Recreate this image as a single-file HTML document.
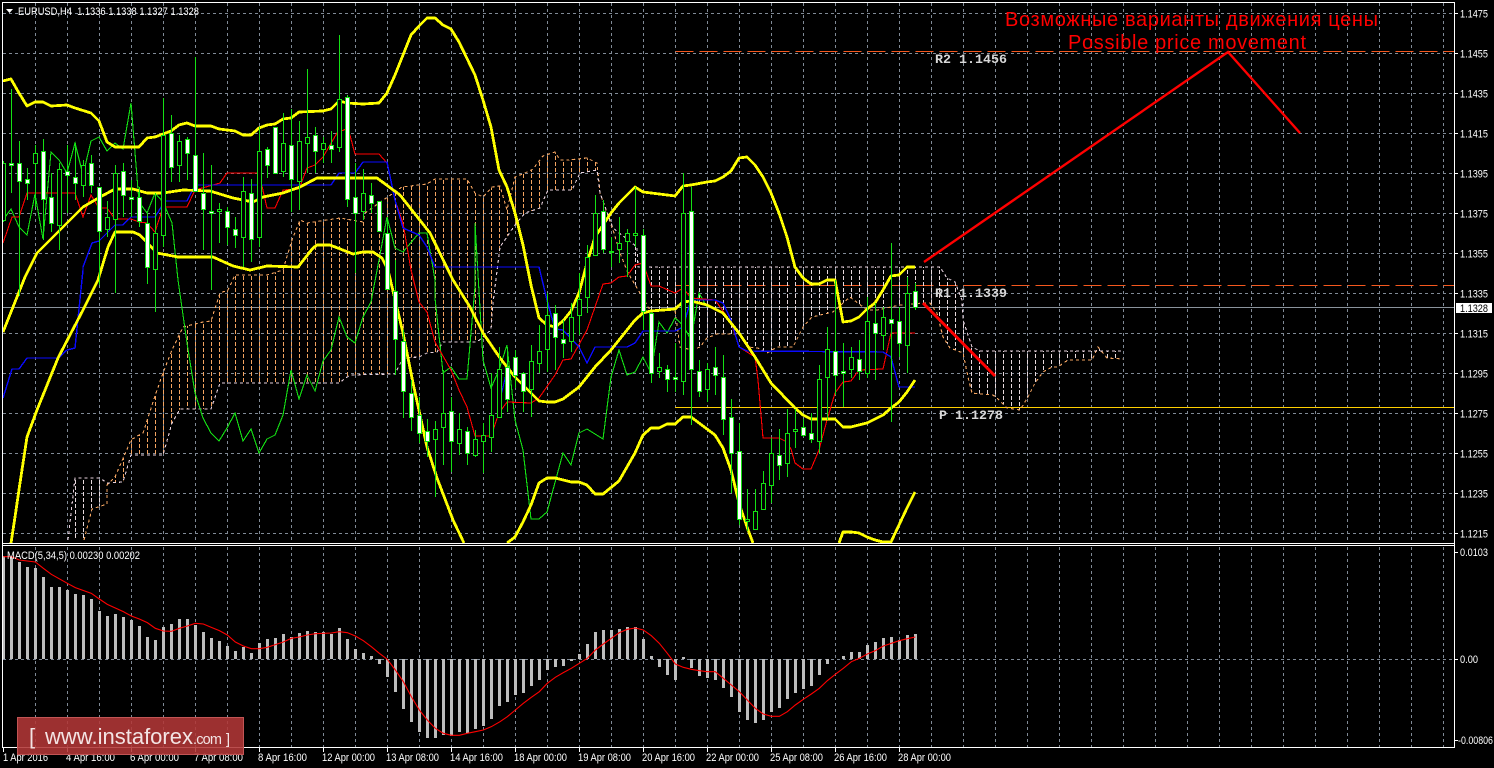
<!DOCTYPE html>
<html><head><meta charset="utf-8"><title>EURUSD,H4</title>
<style>
html,body{margin:0;padding:0;background:#000;width:1494px;height:768px;overflow:hidden}
svg{display:block}
text{font-family:"Liberation Sans","Noto Sans CJK SC",sans-serif;font-size:11px;fill:#fff}
.lvl{font-family:"Liberation Mono",monospace;font-size:13.33px;font-weight:bold;fill:#d8d8d8}
.ru{font-size:20px;fill:#f00}
.wm{fill:#f3e4e4}
.l1{fill:none;stroke-width:1.1;shape-rendering:crispEdges}
.y{fill:none;stroke:#ff0;stroke-width:2.8;stroke-linejoin:round;shape-rendering:crispEdges}
</style></head><body>
<svg width="1494" height="768" viewBox="0 0 1494 768" xmlns="http://www.w3.org/2000/svg">
<defs>
<clipPath id="main"><rect x="3" y="3" width="1451" height="540"/></clipPath>
<clipPath id="cloud"><polygon clip-rule="evenodd" points="68,540 75,478 100,478 107,483 123,482 131,455 163,455 172,423 180,409 211,409 220,383 339,383 350,375 395,374 403,358 419,357 427,353 437,352 443,342 477,342 491,330 493,303 500,247 515,225 525,213 540,208 548,190 572,190 580,173 597,170 600,193 613,228 637,247 638,267 940,267 947,278 955,282 962,300 963,320 972,347 980,351 1123,351 1123,359 1107,358 1098,347 1092,360 1068,360 1058,367 1052,367 1043,372 1035,383 1028,397 1020,410 1007,408 997,398 993,395 972,393 968,377 963,353 950,348 943,337 937,313 930,303 923,303 900,305 877,310 867,310 850,297 833,312 812,317 803,327 793,347 777,347 767,353 758,348 748,347 740,334 717,334 707,338 700,347 692,350 680,347 675,310 650,310 640,293 628,273 620,253 613,230 600,193 597,163 587,158 568,160 560,160 555,152 543,156 533,169 525,173 515,177 507,210 500,186 492,187 483,197 475,193 467,179 435,179 427,184 402,187 379,203 365,213 363,222 340,218 307,223 300,220 292,240 283,270 267,275 235,275 228,290 220,293 211,321 203,322 183,327 172,350 163,373 155,396 143,433 139,435 131,440 115,477 107,485 107,504 92,509 84,540"/></clipPath>
<pattern id="pO" patternUnits="userSpaceOnUse" x="3" y="0" width="8" height="6"><rect width="1" height="4" fill="#f4a460"/></pattern>
<pattern id="pT" patternUnits="userSpaceOnUse" x="3" y="0" width="8" height="6"><rect width="1" height="4" fill="#e6d8dc"/></pattern>
</defs>
<rect width="1494" height="768" fill="#000"/>

<!-- grid -->
<g shape-rendering="crispEdges" stroke="#808a96" stroke-width="1" stroke-dasharray="3 3" fill="none">
<path d="M3 13.5H1454M3 53.5H1454M3 93.5H1454M3 133.5H1454M3 173.5H1454M3 213.5H1454M3 253.5H1454M3 293.5H1454M3 333.5H1454M3 373.5H1454M3 413.5H1454M3 453.5H1454M3 493.5H1454M3 533.5H1454M3 659.5H1454"/>
<path d="M35.5 3V543M67.5 3V543M99.5 3V543M131.5 3V543M163.5 3V543M195.5 3V543M227.5 3V543M259.5 3V543M291.5 3V543M323.5 3V543M355.5 3V543M387.5 3V543M419.5 3V543M451.5 3V543M483.5 3V543M515.5 3V543M547.5 3V543M579.5 3V543M611.5 3V543M643.5 3V543M675.5 3V543M707.5 3V543M739.5 3V543M771.5 3V543M803.5 3V543M835.5 3V543M867.5 3V543M899.5 3V543M931.5 3V543M963.5 3V543M995.5 3V543M1027.5 3V543M1059.5 3V543M1091.5 3V543M1123.5 3V543M1155.5 3V543M1187.5 3V543M1219.5 3V543M1251.5 3V543M1283.5 3V543M1315.5 3V543M1347.5 3V543M1379.5 3V543M1411.5 3V543M1443.5 3V543"/>
<path d="M35.5 547V747M67.5 547V747M99.5 547V747M131.5 547V747M163.5 547V747M195.5 547V747M227.5 547V747M259.5 547V747M291.5 547V747M323.5 547V747M355.5 547V747M387.5 547V747M419.5 547V747M451.5 547V747M483.5 547V747M515.5 547V747M547.5 547V747M579.5 547V747M611.5 547V747M643.5 547V747M675.5 547V747M707.5 547V747M739.5 547V747M771.5 547V747M803.5 547V747M835.5 547V747M867.5 547V747M899.5 547V747M931.5 547V747M963.5 547V747M995.5 547V747M1027.5 547V747M1059.5 547V747M1091.5 547V747M1123.5 547V747M1155.5 547V747M1187.5 547V747M1219.5 547V747M1251.5 547V747M1283.5 547V747M1315.5 547V747M1347.5 547V747M1379.5 547V747M1411.5 547V747M1443.5 547V747"/>
</g>

<!-- level lines -->
<g shape-rendering="crispEdges" fill="none">
<path d="M675.5 51.5H1454M675.5 285.5H1454" stroke="#f5581e" stroke-dasharray="18 6"/>
<path d="M675 407.5H1454" stroke="#ffd000"/>
<path d="M3 307.5H1454" stroke="#8a939c"/>
</g>

<g clip-path="url(#main)">
<!-- cloud -->
<g clip-path="url(#cloud)" shape-rendering="crispEdges">
<rect x="60" y="3" width="47" height="540" fill="url(#pT)"/>
<rect x="107" y="3" width="501" height="540" fill="url(#pO)"/>
<rect x="608" y="3" width="520" height="540" fill="url(#pT)"/>
</g>
<polyline class="l1" stroke="#f4a460" stroke-dasharray="3 3" points="84,540 92,509 107,504 107,485 115,477 131,440 139,435 143,433 155,396 163,373 172,350 183,327 203,322 211,321 220,293 228,290 235,275 267,275 283,270 292,240 300,220 307,223 340,218 363,222 365,213 379,203 402,187 427,184 435,179 467,179 475,193 483,197 492,187 500,186 507,210 515,177 525,173 533,169 543,156 555,152 560,160 568,160 587,158 597,163 600,193 613,230 620,253 628,273 640,293 650,310 675,310 680,347 692,350 700,347 707,338 717,334 740,334 748,347 758,348 767,353 777,347 793,347 803,327 812,317 833,312 850,297 867,310 877,310 900,305 923,303 930,303 937,313 943,337 950,348 963,353 968,377 972,393 993,395 997,398 1007,408 1020,410 1028,397 1035,383 1043,372 1052,367 1058,367 1068,360 1092,360 1098,347 1107,358 1123,359"/>
<polyline class="l1" stroke="#e6d0dc" stroke-dasharray="3 3" points="68,540 75,478 100,478 107,483 123,482 131,455 163,455 172,423 180,409 211,409 220,383 339,383 350,375 395,374 403,358 419,357 427,353 437,352 443,342 477,342 491,330 493,303 500,247 515,225 525,213 540,208 548,190 572,190 580,173 597,170 600,193 613,228 637,247 638,267 940,267 947,278 955,282 962,300 963,320 972,347 980,351 1123,351"/>

<!-- chikou -->
<polyline class="l1" stroke="#14e014" points="3,220 11,209 19,227 27,235 35,194 43,239 51,152 59,160 67,173 75,143 83,175 91,141 99,137 107,151 115,143 123,149 131,103 139,202 147,213 155,193 163,202 172,223 178,280 187,343 195,393 203,418 211,433 219,441 227,428 235,413 243,441 251,429 259,453 267,439 275,435 283,415 291,370 299,399 307,375 315,391 323,361 331,350 339,317 347,337 355,343 363,317 371,302 379,260 387,217 395,248 403,252 419,233 427,233 435,280 435,298 443,373 451,367 459,379 467,379 475,287 475,223 483,360 491,388 499,370 507,345 515,420 523,450 531,519 539,519 547,512 563,453 571,465 579,433 587,429 603,439 611,377 619,350 627,375 635,372 643,357 651,373 659,322 667,333 675,318 683,325 691,340 699,293 707,307"/>
<!-- tenkan -->
<polyline class="l1" stroke="#f00" points="3,243 12,217 19,217 27,193 75,193 83,217 91,195 99,208 107,208 115,219 131,219 139,222 147,223 155,232 163,207 187,207 195,190 220,183 227,173 259,173 267,208 275,208 283,190 299,189 307,168 315,165 323,157 337,133 348,128 355,154 379,154 387,163 395,200 403,223 411,270 419,302 427,312 435,342 451,370 459,390 467,407 475,436 491,436 499,413 507,402 531,403 539,398 555,375 563,360 571,359 587,330 603,284 611,283 619,277 627,276 635,265 643,263 651,286 659,286 675,293 683,288 691,298 715,300 731,322 739,347 755,357 758,380 763,438 779,438 785,441 791,449 795,463 803,469 811,469 819,450 827,420 835,393 843,382 851,381 859,370 883,369 891,333 915,333"/>
<!-- kijun -->
<polyline class="l1" stroke="#0a0aff" style="stroke-width:1.4" points="3,398 12,369 19,369 27,358 59,358 67,350 75,348 83,270 83,267 92,243 99,241 115,225 123,225 131,217 155,217 165,201 187,201 195,185 331,185 339,173 355,173 363,162 387,162 395,200 403,228 419,235 427,247 435,267 539,267 547,300 555,329 563,330 579,347 587,363 595,347 627,347 635,343 643,331 675,331 683,327 691,300 715,300 723,303 731,320 739,347 747,351 883,352 891,357 899,387 915,387"/>
<polyline class="l1" stroke="#0a0aff" points="500,400 507,370"/>
<!-- bollinger -->
<polyline class="y" points="3,81 11,79 19,93 27,106 35,102 43,102 51,106 67,105 75,108 91,113 99,121 107,142 115,147 139,147 147,138 155,137 171,131 179,125 187,123 195,126 211,126 219,129 235,131 243,135 251,135 259,128 267,125 275,124 283,119 291,118 299,112 323,111 331,109 339,101 347,103 363,104 379,103 387,93 395,75 411,35 419,26 427,18 435,18 443,25 451,29 459,42 475,75 483,100 491,127 499,170 507,187 515,213 523,245 531,285 539,318 547,325 555,327 563,321 571,311 579,293 587,263 595,237 611,213 619,203 635,187 643,192 651,193 675,196 683,186 691,185 707,182 715,181 723,177 731,171 739,158 747,157 755,165 763,177 771,193 779,213 787,237 795,267 803,278 811,284 819,284 827,280 835,280 843,322 851,321 859,317 867,309 875,303 883,290 891,276 899,275 907,267 915,267"/>
<polyline class="y" points="3,332 13,307 25,277 37,253 67,223 83,207 100,197 115,189 133,189 147,193 163,193 183,190 210,191 233,198 253,202 263,197 283,193 300,187 317,178 377,178 400,195 430,233 453,280 470,307 483,333 500,358 515,377 531,393 539,401 547,402 555,402 563,399 579,387 595,367 611,350 627,330 635,320 643,313 651,311 675,309 683,302 691,301 707,305 723,313 739,333 755,357 771,383 795,408 803,415 811,419 835,419 843,427 851,427 867,423 883,415 891,408 899,402 907,392 915,380"/>
<polyline class="y" points="11,543 15,517 20,483 27,437 37,410 58,358 83,310 98,280 108,247 115,232 133,232 140,235 157,253 178,257 213,257 233,266 250,270 267,266 298,267 313,248 317,245 330,245 353,254 363,252 373,252 382,258 388,270 403,333 413,383 427,447 437,478 453,520 464,543"/>
<polyline class="y" points="507,543 515,537 523,522 531,505 539,483 547,478 555,478 571,482 579,482 587,485 595,494 603,494 619,481 627,467 635,453 643,435 651,428 659,428 667,424 675,424 683,417 691,417 699,423 715,435 723,448 731,470 739,503 747,527 753,543"/>
<polyline class="y" points="839,543 843,532 851,532 859,533 867,537 875,540 883,542 891,542 899,525 907,508 915,492"/>

<!-- candle wicks -->
<path shape-rendering="crispEdges" fill="none" stroke="#14e014" d="M3.5 161V222M11.5 89V193M19.5 141V296M27.5 168V200M35.5 145V207M43.5 139V240M51.5 173V232M59.5 163V250M67.5 145V213M75.5 143V200M83.5 160V197M91.5 155V193M99.5 187V285M107.5 201V237M115.5 165V293M123.5 163V217M131.5 180V217M139.5 187V227M147.5 213V284M155.5 193V312M163.5 98V247M171.5 115V182M179.5 135V182M187.5 137V180M195.5 57V192M203.5 153V250M211.5 165V290M219.5 203V243M227.5 207V245M235.5 217V248M243.5 177V267M251.5 179V262M259.5 127V247M267.5 147V178M275.5 127V173M283.5 113V177M291.5 109V212M299.5 121V210M307.5 69V173M315.5 127V173M323.5 137V163M331.5 131V163M339.5 35V152M347.5 95V207M355.5 163V273M363.5 169V220M371.5 183V213M379.5 201V232M387.5 217V289M395.5 260V375M403.5 330V418M411.5 380V431M419.5 397V443M427.5 419V457M435.5 421V497M443.5 370V465M451.5 397V472M459.5 413V455M467.5 427V465M475.5 430V457M483.5 423V473M491.5 373V452M499.5 347V418M507.5 350V412M515.5 350V388M523.5 372V412M531.5 345V417M539.5 325V373M547.5 293V372M555.5 305V370M563.5 320V358M571.5 303V352M579.5 273V335M587.5 245V313M595.5 195V255M603.5 200V253M611.5 237V267M619.5 217V263M627.5 229V277M635.5 187V247M643.5 229V330M651.5 312V383M659.5 353V378M667.5 365V392M675.5 343V392M683.5 173V395M691.5 187V425M699.5 360V397M707.5 363V402M715.5 347V395M723.5 355V435M731.5 399V493M739.5 423V525M747.5 489V531M755.5 489V530M763.5 471V510M771.5 438V503M779.5 429V480M787.5 409V477M795.5 409V448M803.5 419V437M811.5 413V443M819.5 365V453M827.5 327V420M835.5 280V395M843.5 343V407M851.5 347V378M859.5 340V380M867.5 297V378M875.5 303V380M883.5 307V350M891.5 243V422M899.5 307V357M907.5 277V373M915.5 283V310"/>
<!-- hollow bodies -->
<path shape-rendering="crispEdges" fill="#000" stroke="#14e014" d="M1.5 163.5h4V220.5h-4zM33.5 153.5h4V163.5h-4zM57.5 169.5h4V225.5h-4zM81.5 165.5h4V185.5h-4zM105.5 217.5h4V229.5h-4zM113.5 173.5h4V219.5h-4zM153.5 233.5h4V269.5h-4zM161.5 135.5h4V235.5h-4zM177.5 141.5h4V165.5h-4zM217.5 209.5h4V211.5h-4zM241.5 191.5h4V237.5h-4zM257.5 151.5h4V237.5h-4zM281.5 143.5h4V171.5h-4zM297.5 141.5h4V181.5h-4zM305.5 137.5h4V143.5h-4zM321.5 143.5h4V149.5h-4zM337.5 99.5h4V147.5h-4zM361.5 193.5h4V211.5h-4zM433.5 429.5h4V439.5h-4zM441.5 413.5h4V427.5h-4zM457.5 429.5h4V443.5h-4zM473.5 439.5h4V455.5h-4zM481.5 435.5h4V441.5h-4zM489.5 415.5h4V437.5h-4zM497.5 369.5h4V417.5h-4zM529.5 361.5h4V389.5h-4zM537.5 351.5h4V363.5h-4zM545.5 315.5h4V349.5h-4zM569.5 317.5h4V341.5h-4zM577.5 299.5h4V315.5h-4zM585.5 257.5h4V297.5h-4zM593.5 213.5h4V255.5h-4zM617.5 243.5h4V249.5h-4zM625.5 233.5h4V241.5h-4zM633.5 233.5h4V235.5h-4zM657.5 367.5h4V371.5h-4zM681.5 213.5h4V381.5h-4zM705.5 369.5h4V389.5h-4zM745.5 519.5h4V521.5h-4zM753.5 511.5h4V529.5h-4zM761.5 483.5h4V509.5h-4zM769.5 453.5h4V485.5h-4zM785.5 433.5h4V463.5h-4zM793.5 429.5h4V431.5h-4zM817.5 379.5h4V441.5h-4zM825.5 349.5h4V377.5h-4zM849.5 357.5h4V369.5h-4zM865.5 321.5h4V373.5h-4zM881.5 317.5h4V335.5h-4zM905.5 293.5h4V345.5h-4z"/>
<!-- bearish bodies -->
<path shape-rendering="crispEdges" fill="#fff" stroke="#14e014" d="M9.5 163.5h4V165.5h-4zM17.5 163.5h4V181.5h-4zM25.5 179.5h4V183.5h-4zM41.5 151.5h4V199.5h-4zM49.5 197.5h4V223.5h-4zM65.5 171.5h4V175.5h-4zM73.5 177.5h4V183.5h-4zM89.5 163.5h4V185.5h-4zM97.5 187.5h4V231.5h-4zM121.5 171.5h4V195.5h-4zM129.5 197.5h4V199.5h-4zM137.5 197.5h4V221.5h-4zM145.5 223.5h4V267.5h-4zM169.5 133.5h4V167.5h-4zM185.5 139.5h4V153.5h-4zM193.5 155.5h4V191.5h-4zM201.5 193.5h4V209.5h-4zM209.5 211.5h4V213.5h-4zM225.5 211.5h4V227.5h-4zM233.5 229.5h4V235.5h-4zM249.5 193.5h4V239.5h-4zM265.5 149.5h4V165.5h-4zM273.5 127.5h4V173.5h-4zM289.5 145.5h4V179.5h-4zM313.5 135.5h4V151.5h-4zM329.5 145.5h4V149.5h-4zM345.5 97.5h4V199.5h-4zM353.5 197.5h4V213.5h-4zM369.5 195.5h4V203.5h-4zM377.5 201.5h4V231.5h-4zM385.5 233.5h4V289.5h-4zM393.5 291.5h4V339.5h-4zM401.5 341.5h4V391.5h-4zM409.5 393.5h4V417.5h-4zM417.5 415.5h4V433.5h-4zM425.5 431.5h4V441.5h-4zM449.5 411.5h4V441.5h-4zM465.5 431.5h4V453.5h-4zM505.5 367.5h4V399.5h-4zM513.5 357.5h4V375.5h-4zM521.5 373.5h4V391.5h-4zM553.5 313.5h4V337.5h-4zM561.5 339.5h4V343.5h-4zM601.5 211.5h4V249.5h-4zM609.5 251.5h4V252.5h-4zM641.5 235.5h4V311.5h-4zM649.5 313.5h4V373.5h-4zM665.5 369.5h4V379.5h-4zM673.5 377.5h4V379.5h-4zM689.5 211.5h4V369.5h-4zM697.5 371.5h4V391.5h-4zM713.5 367.5h4V375.5h-4zM721.5 377.5h4V419.5h-4zM729.5 417.5h4V453.5h-4zM737.5 451.5h4V519.5h-4zM777.5 455.5h4V465.5h-4zM801.5 427.5h4V435.5h-4zM809.5 433.5h4V439.5h-4zM833.5 351.5h4V375.5h-4zM841.5 371.5h4V373.5h-4zM857.5 359.5h4V371.5h-4zM873.5 323.5h4V333.5h-4zM889.5 319.5h4V323.5h-4zM897.5 321.5h4V343.5h-4zM913.5 291.5h4V307.5h-4z"/>
<!-- drawn trend lines -->
<polyline fill="none" stroke="#f00" stroke-width="2.4" points="924,262 1228,52 1300,133"/>
<line x1="923" y1="303" x2="995" y2="376" stroke="#f00" stroke-width="3"/>
</g>

<!-- MACD histogram -->
<path shape-rendering="crispEdges" fill="none" stroke="#bdbdbd" stroke-width="3" d="M3.5 659V556M11.5 659V557M19.5 659V562M27.5 659V567M35.5 659V568M43.5 659V577M51.5 659V587M59.5 659V587M67.5 659V590M75.5 659V594M83.5 659V595M91.5 659V599M99.5 659V611M107.5 659V616M115.5 659V614M123.5 659V617M131.5 659V620M139.5 659V626M147.5 659V637M155.5 659V640M163.5 659V627M171.5 659V624M179.5 659V619M187.5 659V619M195.5 659V625M203.5 659V632M211.5 659V638M219.5 659V641M227.5 659V646M235.5 659V651M243.5 659V647M251.5 659V653M259.5 659V643M267.5 659V639M275.5 659V638M283.5 659V634M291.5 659V637M299.5 659V633M307.5 659V631M315.5 659V632M323.5 659V632M331.5 659V634M339.5 659V628M347.5 659V639M355.5 659V649M363.5 659V653M371.5 659V656M379.5 659V664M387.5 659V677M395.5 659V692M403.5 659V709M411.5 659V722M419.5 659V732M427.5 659V738M435.5 659V738M443.5 659V735M451.5 659V736M459.5 659V732M467.5 659V733M475.5 659V729M483.5 659V726M491.5 659V719M499.5 659V706M507.5 659V702M515.5 659V695M523.5 659V693M531.5 659V686M539.5 659V680M547.5 659V670M555.5 659V667M563.5 659V666M571.5 659V661M579.5 659V654M587.5 659V644M595.5 659V632M603.5 659V630M611.5 659V630M619.5 659V629M627.5 659V627M635.5 659V627M643.5 659V639M651.5 659V656M659.5 659V667M667.5 659V675M675.5 659V680M683.5 659V657M691.5 659V668M699.5 659V676M707.5 659V678M715.5 659V680M723.5 659V688M731.5 659V697M739.5 659V712M747.5 659V720M755.5 659V723M763.5 659V720M771.5 659V712M779.5 659V708M787.5 659V699M795.5 659V693M803.5 659V689M811.5 659V686M819.5 659V675M827.5 659V664M843.5 659V656M851.5 659V652M859.5 659V652M867.5 659V645M875.5 659V642M883.5 659V638M891.5 659V637M899.5 659V640M907.5 659V635M915.5 659V634"/>
<!-- MACD signal -->
<g transform="translate(0 540) scale(.33333)"><polyline fill="none" stroke="#f00" stroke-width="3.3" points="10,50 34,50 58,60 106,66 130,85 154,103 202,130 226,143 274,160 298,177 322,193 370,215 394,228 418,237 442,248 466,265 490,273 514,274 538,265 562,258 586,250 610,252 634,262 658,272 682,285 706,306 730,318 754,326 778,326 802,322 826,314 850,306 874,295 898,291 922,285 946,281 994,279 1018,275 1042,278 1066,288 1090,302 1114,320 1138,340 1162,358 1186,390 1210,425 1234,470 1258,510 1282,540 1306,565 1330,580 1354,586 1378,586 1402,580 1426,575 1450,570 1474,560 1500,545 1522,530 1546,510 1570,490 1594,472 1618,455 1642,430 1666,412 1690,398 1714,385 1738,370 1762,355 1786,330 1810,312 1834,295 1858,278 1882,268 1906,264 1930,270 1954,287 1978,310 2002,340 2026,372 2050,382 2074,388 2098,392 2122,395 2146,395 2170,415 2194,435 2218,455 2242,480 2266,505 2290,522 2314,529 2338,529 2362,515 2386,495 2410,478 2434,462 2458,445 2482,422 2506,403 2530,385 2554,365 2578,355 2602,342 2626,332 2650,318 2674,310 2698,302 2722,296 2746,291"/></g>

<!-- frames -->
<g shape-rendering="crispEdges" fill="none" stroke="#fff">
<path d="M2.5 2.5H1454.5V747.5H2.5ZM2.5 543.5H1454.5M2.5 545.5H1454.5"/>
<path d="M1454 13.5h4M1454 53.5h4M1454 93.5h4M1454 133.5h4M1454 173.5h4M1454 213.5h4M1454 253.5h4M1454 293.5h4M1454 333.5h4M1454 373.5h4M1454 413.5h4M1454 453.5h4M1454 493.5h4M1454 533.5h4M1454 552.5h4M1454 659.5h4M1454 740.5h4"/>
<path d="M3.5 747v5M67.5 747v5M131.5 747v5M195.5 747v5M259.5 747v5M323.5 747v5M387.5 747v5M451.5 747v5M515.5 747v5M579.5 747v5M643.5 747v5M707.5 747v5M771.5 747v5M835.5 747v5M899.5 747v5"/>
</g>

<!-- price axis -->
<g lengthAdjust="spacingAndGlyphs">
<text x="1460" y="17.5" textLength="28" lengthAdjust="spacingAndGlyphs">1.1475</text>
<text x="1460" y="57.5" textLength="28" lengthAdjust="spacingAndGlyphs">1.1455</text>
<text x="1460" y="97.5" textLength="28" lengthAdjust="spacingAndGlyphs">1.1435</text>
<text x="1460" y="137.5" textLength="28" lengthAdjust="spacingAndGlyphs">1.1415</text>
<text x="1460" y="177.5" textLength="28" lengthAdjust="spacingAndGlyphs">1.1395</text>
<text x="1460" y="217.5" textLength="28" lengthAdjust="spacingAndGlyphs">1.1375</text>
<text x="1460" y="257.5" textLength="28" lengthAdjust="spacingAndGlyphs">1.1355</text>
<text x="1460" y="297.5" textLength="28" lengthAdjust="spacingAndGlyphs">1.1335</text>
<text x="1460" y="337.5" textLength="28" lengthAdjust="spacingAndGlyphs">1.1315</text>
<text x="1460" y="377.5" textLength="28" lengthAdjust="spacingAndGlyphs">1.1295</text>
<text x="1460" y="417.5" textLength="28" lengthAdjust="spacingAndGlyphs">1.1275</text>
<text x="1460" y="457.5" textLength="28" lengthAdjust="spacingAndGlyphs">1.1255</text>
<text x="1460" y="497.5" textLength="28" lengthAdjust="spacingAndGlyphs">1.1235</text>
<text x="1460" y="537.5" textLength="28" lengthAdjust="spacingAndGlyphs">1.1215</text>
</g>
<rect x="1456" y="303" width="36" height="10" fill="#fff"/>
<text x="1460" y="312" textLength="28" lengthAdjust="spacingAndGlyphs" style="fill:#000">1.1328</text>
<text x="1460" y="556" textLength="28" lengthAdjust="spacingAndGlyphs">0.0103</text>
<text x="1460" y="663" textLength="18" lengthAdjust="spacingAndGlyphs">0.00</text>
<text x="1458" y="744" textLength="35" lengthAdjust="spacingAndGlyphs">-0.00806</text>

<!-- time axis -->
<text x="3" y="761" textLength="45" lengthAdjust="spacingAndGlyphs">1 Apr 2016</text>
<text x="66" y="761" textLength="49" lengthAdjust="spacingAndGlyphs">4 Apr 16:00</text>
<text x="130" y="761" textLength="49" lengthAdjust="spacingAndGlyphs">6 Apr 00:00</text>
<text x="194" y="761" textLength="49" lengthAdjust="spacingAndGlyphs">7 Apr 08:00</text>
<text x="258" y="761" textLength="49" lengthAdjust="spacingAndGlyphs">8 Apr 16:00</text>
<text x="322" y="761" textLength="53" lengthAdjust="spacingAndGlyphs">12 Apr 00:00</text>
<text x="386" y="761" textLength="53" lengthAdjust="spacingAndGlyphs">13 Apr 08:00</text>
<text x="450" y="761" textLength="53" lengthAdjust="spacingAndGlyphs">14 Apr 16:00</text>
<text x="514" y="761" textLength="53" lengthAdjust="spacingAndGlyphs">18 Apr 00:00</text>
<text x="578" y="761" textLength="53" lengthAdjust="spacingAndGlyphs">19 Apr 08:00</text>
<text x="642" y="761" textLength="53" lengthAdjust="spacingAndGlyphs">20 Apr 16:00</text>
<text x="706" y="761" textLength="53" lengthAdjust="spacingAndGlyphs">22 Apr 00:00</text>
<text x="770" y="761" textLength="53" lengthAdjust="spacingAndGlyphs">25 Apr 08:00</text>
<text x="834" y="761" textLength="53" lengthAdjust="spacingAndGlyphs">26 Apr 16:00</text>
<text x="898" y="761" textLength="53" lengthAdjust="spacingAndGlyphs">28 Apr 00:00</text>

<!-- captions -->
<polygon points="6,9 13,9 9.5,13" fill="#fff"/>
<text x="18" y="15" textLength="181" lengthAdjust="spacingAndGlyphs" xml:space="preserve">EURUSD,H4  1.1336 1.1338 1.1327 1.1328</text>
<text x="7" y="559" textLength="133" lengthAdjust="spacingAndGlyphs">MACD(5,34,5) 0.00230 0.00202</text>

<text class="lvl" x="935" y="63">R2 1.1456</text>
<text class="lvl" x="935" y="297">R1 1.1339</text>
<text class="lvl" x="939" y="419">P 1.1278</text>

<text class="ru" x="1005" y="26" textLength="373">Возможные варианты движения цены</text>
<text class="ru" x="1068" y="49" textLength="238">Possible price movement</text>

<!-- watermark -->
<rect x="17.5" y="717.5" width="226" height="37" fill="#b23737" fill-opacity=".88" stroke="#c25555" stroke-width="1"/>
<text class="wm" x="29" y="744" style="font-size:22px">[</text>
<text class="wm" x="45" y="744" textLength="148" style="font-size:22px">www.instaforex</text>
<text class="wm" x="193" y="744" textLength="29" style="font-size:14.5px">.com</text>
<text class="wm" x="226" y="744" style="font-size:14.5px">]</text>
</svg>
</body></html>
